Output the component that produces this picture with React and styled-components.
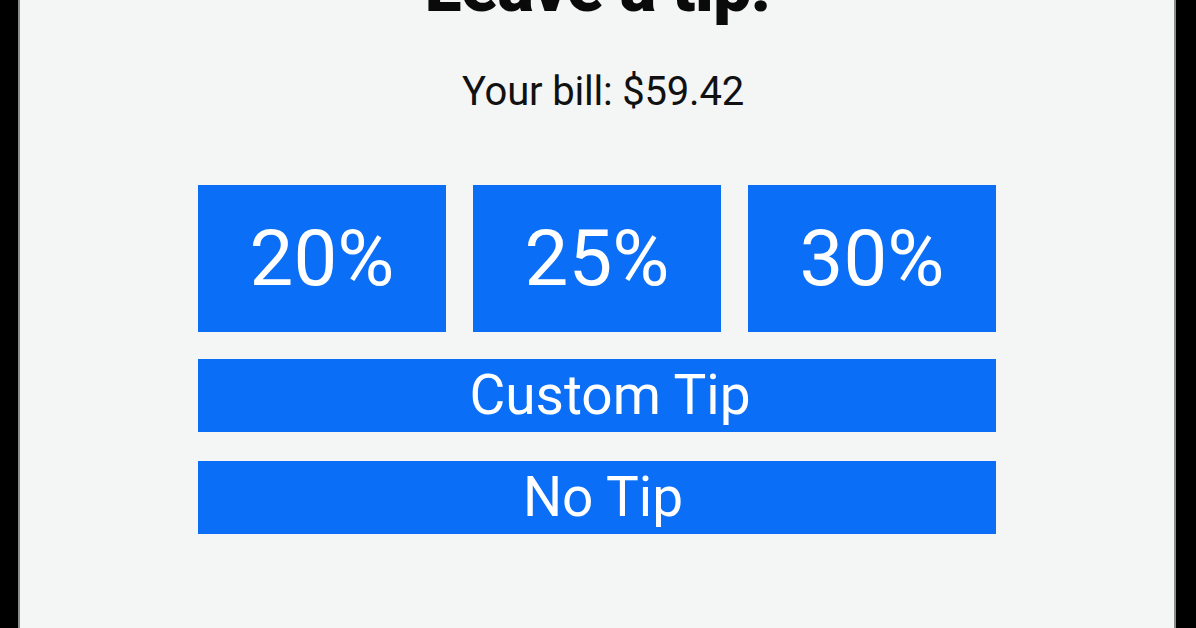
import styled, { createGlobalStyle } from 'styled-components';

const tipOptions = [20, 25, 30];

function App() {
  return (
    <>
      <GlobalStyle />
      <Screen>
        <Panel>
          <Title>Leave a tip!</Title>
          <Bill>Your bill: $59.42</Bill>
          <Choices>
            <PercentRow>
              {tipOptions.map((pct) => (
                <TipButton key={pct} $big>{pct}%</TipButton>
              ))}
            </PercentRow>
            <TipButton $indent={26}>Custom Tip</TipButton>
            <TipButton $indent={12} $spaced>No Tip</TipButton>
          </Choices>
        </Panel>
      </Screen>
    </>
  );
}

const GlobalStyle = createGlobalStyle`
  html, body {
    margin: 0;
    padding: 0;
    background: #000;
    overflow: hidden;
  }
  body {
    font-family: Roboto, "Liberation Sans", sans-serif;
  }
`;

const Screen = styled.div`
  height: 628px;
  padding: 0 20px 0 18px;
  background: #000;
  display: flex;
`;

const Panel = styled.main`
  flex: 1;
  background: #f4f5f5;
  border-left: 2px solid #8a8c8c;
  border-right: 2px solid #8a8c8c;
  display: flex;
  flex-direction: column;
  align-items: center;
  overflow: hidden;
`;

const Title = styled.h1`
  margin: -46px 0 0;
  font-size: 68px;
  line-height: 1;
  font-weight: 900;
  color: #0a0a0a;
  letter-spacing: -0.5px;
`;

const Bill = styled.p`
  margin: 50px 0 0;
  padding-left: 12px;
  font-size: 40px;
  line-height: 1;
  color: #111;
  letter-spacing: -0.2px;
`;

const Choices = styled.div`
  margin-top: 73px;
  width: 798px;
  display: flex;
  flex-direction: column;
  gap: 27px;
`;

const PercentRow = styled.div`
  display: grid;
  grid-template-columns: repeat(3, 1fr);
  gap: 27px;
`;

const TipButton = styled.button`
  height: ${(p) => (p.$big ? '147px' : '73px')};
  margin-top: ${(p) => (p.$spaced ? '2px' : '0')};
  border: none;
  padding: 0 0 0 ${(p) => p.$indent || 0}px;
  background: #0a6ef6;
  color: #fff;
  font-family: Roboto, "Liberation Sans", sans-serif;
  font-size: ${(p) => (p.$big ? '78px' : '55px')};
  line-height: 1;
  display: flex;
  align-items: center;
  justify-content: center;
  cursor: pointer;
`;

export default App;
